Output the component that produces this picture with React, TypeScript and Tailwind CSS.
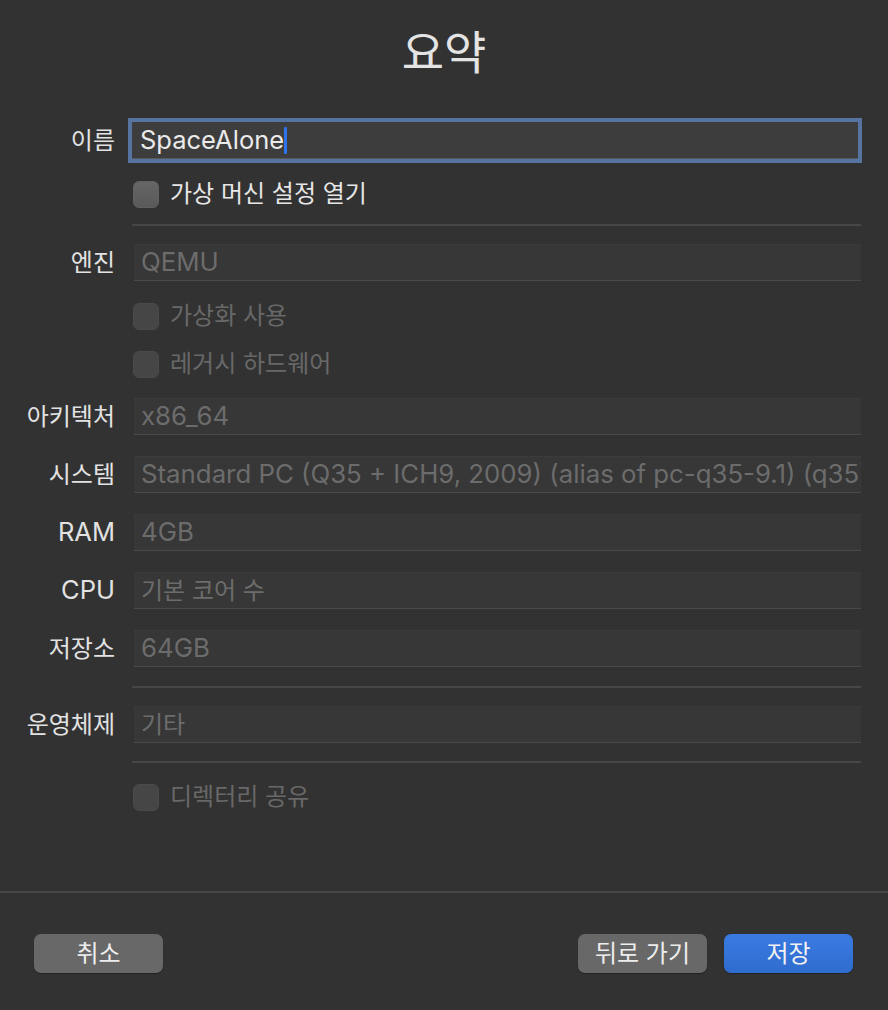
import React from "react";

const FONT = { fontFamily: 'Inter, "Noto Sans CJK KR", sans-serif' };

// Latin strings get a slightly larger size so their width matches the mac system font
const hasHangul = (s: string) => /[가-힣]/.test(s);

const Label = ({ text }: { text: string }) => (
  <div
    className={`w-[115px] shrink-0 text-right text-[#e2e2e2] whitespace-nowrap ${
      hasHangul(text) ? "text-[24px]" : "text-[25.5px]"
    }`}
  >
    {text}
  </div>
);

const Field = ({ label, value, className = "" }: { label: string; value: string; className?: string }) => (
  <div className={`flex items-center h-[37px] ${className}`}>
    <Label text={label} />
    <div className="ml-[19px] mr-[27px] flex-1 min-w-0 h-[37px] flex items-center bg-[#373737] border-t border-t-[#3b3b3b] border-b border-b-[#4a4a4a] px-[7px] overflow-hidden">
      <span className={`text-[#6c6c6c] whitespace-nowrap ${hasHangul(value) ? "text-[24px]" : "text-[25.8px]"}`}>
        {value}
      </span>
    </div>
  </div>
);

const Check = ({ label, disabled, className = "" }: { label: string; disabled?: boolean; className?: string }) => (
  <div className={`flex items-center h-[26px] pl-[133px] ${className}`}>
    <div
      className={`w-[26px] h-[27px] shrink-0 rounded-[6px] ${
        disabled
          ? "bg-[#464646] border border-[#4a4a4a]"
          : "bg-gradient-to-b from-[#666666] to-[#595959] border border-[#606060]"
      }`}
    />
    <span className={`ml-[11px] text-[24px] ${disabled ? "text-[#686868]" : "text-[#e6e6e6]"}`}>{label}</span>
  </div>
);

const Divider = ({ className = "" }: { className?: string }) => (
  <div className={`ml-[132px] mr-[27px] h-[2px] bg-[#474747] ${className}`} />
);

export default function App() {
  return (
    <div className="w-[888px] h-[1010px] bg-[#323232] flex flex-col overflow-hidden" style={FONT}>
      {/* Title */}
      <div className="h-[118px] pt-[24px] flex justify-center">
        <h1 className="text-[46px] leading-[56px] text-[#e4e4e4]">요약</h1>
      </div>

      {/* Name */}
      <div className="flex items-center h-[45px]">
        <Label text="이름" />
        <div className="ml-[17px] mr-[30px] flex-1 h-[37px] flex items-center bg-[#3d3d3d] border-b border-b-[#595959] ring-4 ring-[#56749f] px-[8px]">
          <span className="text-[25.5px] text-[#eaeaea]">SpaceAlone</span>
          <span className="w-[3px] h-[27px] bg-[#2d74ee] rounded-[1px]" />
        </div>
      </div>

      <Check label="가상 머신 설정 열기" className="mt-[17px] h-[28px]" />
      <Divider className="mt-[16px]" />

      <Field label="엔진" value="QEMU" className="mt-[18px]" />
      <Check label="가상화 사용" disabled className="mt-[22px]" />
      <Check label="레거시 하드웨어" disabled className="mt-[22px]" />

      <Field label="아키텍처" value="x86_64" className="mt-[21px]" />
      <Field
        label="시스템"
        value="Standard PC (Q35 + ICH9, 2009) (alias of pc-q35-9.1) (q35)"
        className="mt-[21px]"
      />
      <Field label="RAM" value="4GB" className="mt-[21px]" />
      <Field label="CPU" value="기본 코어 수" className="mt-[21px]" />
      <Field label="저장소" value="64GB" className="mt-[21px]" />

      <Divider className="mt-[19px]" />
      <Field label="운영체제" value="기타" className="mt-[18px]" />
      <Divider className="mt-[18px]" />

      <Check label="디렉터리 공유" disabled className="mt-[21px]" />

      {/* Footer */}
      <div className="mt-[81px] h-[2px] bg-[#464646]" />
      <div className="mt-[41px] flex items-center px-[34px] pr-[35px]">
        <button className="w-[129px] h-[39px] rounded-[7px] bg-[#686868] text-[24px] text-[#ededed] shadow-[0_1px_1px_rgba(0,0,0,0.3)]">
          취소
        </button>
        <div className="flex-1" />
        <button className="w-[129px] h-[39px] rounded-[7px] bg-[#686868] text-[24px] text-[#ededed] shadow-[0_1px_1px_rgba(0,0,0,0.3)]">
          뒤로 가기
        </button>
        <button className="ml-[17px] w-[129px] h-[39px] rounded-[7px] bg-gradient-to-b from-[#3a7be2] to-[#2f6ccf] text-[24px] text-[#f2f2f2] shadow-[0_1px_1px_rgba(0,0,0,0.3)]">
          저장
        </button>
      </div>
    </div>
  );
}
